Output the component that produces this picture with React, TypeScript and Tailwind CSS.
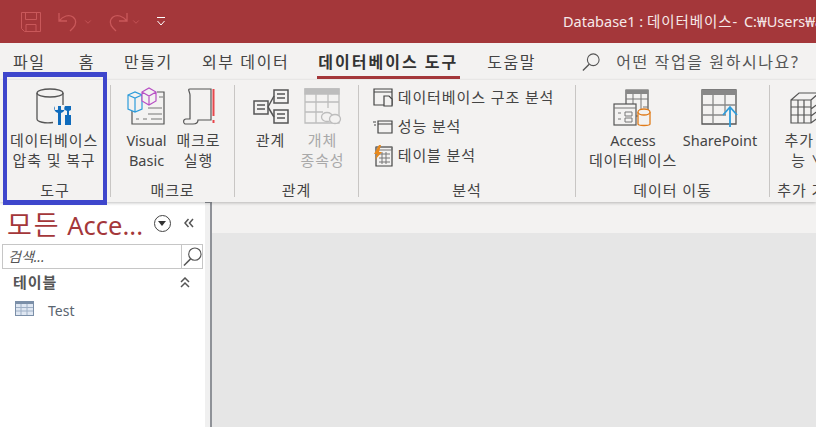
import { ChevronDown } from 'lucide-react';
import type { ReactNode } from 'react';

const font = "font-['Noto_Sans','Noto_Sans_CJK_KR',sans-serif]";
const hangul = /[가-힣]/;

function Kr({ children }: { children: ReactNode }) {
  return <span className="tracking-[0.9px]">{children}</span>;
}

function QuickAccess() {
  return (
    <div className="flex items-center pl-[21px] text-[#c9585a]">
      <svg width="20" height="20" viewBox="0 0 20 20" fill="none" stroke="currentColor">
        <path d="M.5.5h19v19H3.500l-3-3zM4.500.5v7h11v-7M5 19.500v-7h10v7" />
      </svg>
      <div className="ml-[16px] flex items-center gap-[2px]">
        <svg width="24" height="21" viewBox="0 0 24 21" fill="none" stroke="currentColor" strokeWidth="1.300">
          <path d="M2 2v8h8M2 10c4-5 10-7 14-4 4 3 3 8 0 11l-3 3" />
        </svg>
        <ChevronDown className="h-2.5 w-2.5" />
      </div>
      <div className="ml-[12px] flex items-center gap-[2px]">
        <svg width="24" height="21" viewBox="0 0 24 21" fill="none" stroke="currentColor" strokeWidth="1.300">
          <path d="M22 2v8h-8M22 10c-4-5-10-7-14-4-4 3-3 8 0 11l3 3" />
        </svg>
        <ChevronDown className="h-2.5 w-2.5" />
      </div>
      <svg className="ml-[15px]" width="10" height="9" viewBox="0 0 10 9" fill="none" stroke="#fff">
        <path d="M1 .5h8M1.500 4l3.500 4 3.500-4" />
      </svg>
    </div>
  );
}

function Magnifier({ size }: { size: number }) {
  return (
    <svg width={size} height={size} viewBox="0 0 20 20" fill="none" stroke="#555" strokeWidth="1.200">
      <circle cx="12.500" cy="7.500" r="6.500" />
      <path d="M8 12.500 1 19.500" strokeWidth="1.500" />
    </svg>
  );
}

function Tabs() {
  return (
    <div className="flex h-[37px] items-center gap-[29px] pt-[1px] pl-[13px] text-[16px] leading-[22px] tracking-[1.6px] whitespace-nowrap text-[#444]">
      <div className="mr-[4px]">파일</div>
      <div>홈</div>
      <div>만들기</div>
      <div>외부 데이터</div>
      <div className="relative font-bold tracking-[2px] text-[#333]">
        데이터베이스 도구
        <div className="absolute top-[25px] -right-[2px] -left-[1px] h-[3px] bg-[#a4373a]" />
      </div>
      <div>도움말</div>
      <div className="ml-[17px] flex items-center gap-[16px]">
        <Magnifier size={18} />
        <div className="text-[#555]">어떤 작업을 원하시나요?</div>
      </div>
    </div>
  );
}

function BigButton({ icon, lines, muted, w }: { icon: ReactNode; lines: string[]; muted?: boolean; w: string }) {
  return (
    <div className={`flex shrink-0 flex-col items-center text-[14.5px] leading-[20px] ${w} ${muted ? 'text-[#a9a9a9]' : 'text-[#444]'}`}>
      <div className="mb-[4px] flex h-[40px] items-center justify-center">{icon}</div>
      {lines.map((l) => (
        <div key={l} className={`whitespace-nowrap ${hangul.test(l) ? 'text-[15px] tracking-[0.9px]' : ''}`}>{l}</div>
      ))}
    </div>
  );
}

function Group({ label, w, children, noBorder }: { label: string; w: string; children: ReactNode; noBorder?: boolean }) {
  return (
    <div className={`flex h-[112px] shrink-0 flex-col ${w} ${noBorder ? '' : 'border-r border-[#c8c6c4]'}`}>
      <div className="flex flex-1 justify-center pt-[1px]">{children}</div>
      <div className="-mb-[2px] text-center text-[15px] leading-[18px] tracking-[0.9px] whitespace-nowrap text-[#444]">{label}</div>
    </div>
  );
}

function DbIcon() {
  return (
    <svg className="mt-[1px]" width="36" height="38" viewBox="0 0 36 38" fill="none">
      <ellipse cx="14" cy="5" rx="13" ry="4" stroke="#555" strokeWidth="1.300" />
      <path d="M1 5v26c0 3 8 4.500 16 3.500M27 5v12" stroke="#555" strokeWidth="1.300" />
      <path d="M19 18a4.500 4.500 0 0 0 3 7v12h3V25a4.500 4.500 0 0 0 3-7v4h-2.500l-.5-.5V18h-3v3.500l-.5.5H19z" fill="#0f6cbd" />
      <path d="M29 18h6v4l-2 1v4h2v10h-6V27h2v-4l-2-1z" fill="#0f6cbd" />
    </svg>
  );
}

function VbIcon() {
  return (
    <svg width="42" height="40" viewBox="0 0 42 40" fill="none">
      <path d="M31 6h7v32H6V22" stroke="#555" strokeWidth="1.200" />
      <path d="M33 11h4M22 22h14M22 28h14M10 33h3M17 33h4M25 33h11" stroke="#777" strokeWidth="1.200" />
      <path d="M2 9l7-3 7 3v14l-7 3-7-3zM2 9l7 3 7-3M9 12v14" fill="#f3f2f1" stroke="#2d9cdb" strokeWidth="1.200" />
      <path d="M16 6l7-4 7 4v9l-7 4-7-4zM16 6l7 4 7-4M23 10v9" fill="#f3f2f1" stroke="#b74fc4" strokeWidth="1.200" />
    </svg>
  );
}

function MacroIcon() {
  return (
    <svg className="mt-[1px]" width="34" height="38" viewBox="0 0 34 38" fill="none">
      <path d="M8 1h21v31H16c0 3-2 4-5 4H3c-2-1-2-5 1-5h4V7C8 4 5 1 8 1z" fill="#f3f2f1" stroke="#555" strokeWidth="1.200" />
      <path d="M31.500 1v27" stroke="#e8474c" strokeWidth="2" />
      <path d="M31.500 32v3" stroke="#e8474c" strokeWidth="2" />
    </svg>
  );
}

function RelationIcon() {
  return (
    <svg width="36" height="35" viewBox="0 0 36 35" fill="none" stroke="#555" strokeWidth="1.500">
      <rect x="1" y="12" width="14" height="13" />
      <rect x="21" y="1" width="14" height="13" />
      <rect x="21" y="21" width="14" height="13" />
      <path d="M15 18 21 7M15 18l6 10M4 16h8M4 20h8M24 5h8M24 9h8M24 25h8M24 29h8" />
    </svg>
  );
}

function SubFormIcon() {
  return (
    <svg className="mt-[2px]" width="38" height="38" viewBox="0 0 38 38" fill="none" stroke="#bdbdbd" strokeWidth="1.300">
      <path d="M1 1h34v34H1z" />
      <path d="M1 1h34v5H1z" fill="#bdbdbd" />
      <path d="M1 14h34M1 24h18M12 6v29M24 6v14" />
      <ellipse cx="23" cy="29" rx="5.500" ry="4.500" fill="#f3f2f1" />
      <ellipse cx="31" cy="31" rx="5.500" ry="4.500" fill="#f3f2f1" />
    </svg>
  );
}

function SmallRow({ icon, label }: { icon: ReactNode; label: string }) {
  return (
    <div className="flex h-[29px] items-center gap-[5px] text-[15px] tracking-[0.9px] whitespace-nowrap text-[#444]">
      <div className="flex w-[20px] justify-center">{icon}</div>
      {label}
    </div>
  );
}

function AccessDbIcon() {
  return (
    <svg className="mt-[3px]" width="40" height="38" viewBox="0 0 40 38" fill="none">
      <path d="M13 1h22v26H13z" stroke="#555" strokeWidth="1.200" />
      <path d="M13 1h22v4H13z" fill="#888" />
      <path d="M20 5v12M28 5v22M13 10h22M30 18h5" stroke="#777" />
      <rect x="1" y="15" width="22" height="21" fill="#f3f2f1" stroke="#555" strokeWidth="1.200" />
      <path d="M1 19h22M5 24h3M5 30h3M12 23h7v4h-7zM12 29h7v4h-7z" stroke="#777" />
      <path d="M25 23v12c0 2 12 2 12 0V23" fill="#f3f2f1" stroke="#e07b1a" strokeWidth="1.300" />
      <ellipse cx="31" cy="23" rx="6" ry="3" fill="#f3f2f1" stroke="#e07b1a" strokeWidth="1.300" />
    </svg>
  );
}

function SharePointIcon() {
  return (
    <svg className="mt-[3px]" width="38" height="38" viewBox="0 0 38 38" fill="none">
      <path d="M1 1h34v34H1z" stroke="#555" strokeWidth="1.300" />
      <path d="M1 1h34v5H1z" fill="#888" />
      <path d="M1 16h34M1 26h24M12 6v29M24 6v20" stroke="#888" strokeWidth="1.300" />
      <path d="M29 38V18M22 26l7-8 7 8" stroke="#2d9cdb" strokeWidth="1.800" />
    </svg>
  );
}

function CubeIcon() {
  return (
    <svg className="mt-[3px] -ml-[9px]" width="30" height="33" viewBox="0 0 30 33" fill="none" stroke="#555" strokeWidth="1.200">
      <path d="M1 9l8-7h20v24l-8 6H1zM1 9h20v23M21 9l8-7M1 16h20M1 24h20M8 9v23M14 9v23M21 18l8-6M21 25l8-6" />
    </svg>
  );
}

function Ribbon() {
  return (
    <div className="relative z-10 flex h-[122px] overflow-hidden bg-[#f3f2f1] pt-[5px] shadow-[0_1px_3px_rgba(0,0,0,0.25)]">
      <Group label="도구" w="w-[111px]">
        <div className="-ml-[2px]">
          <BigButton w="w-[100px]" icon={<DbIcon />} lines={['데이터베이스', '압축 및 복구']} />
        </div>
      </Group>
      <Group label="매크로" w="w-[124px]">
        <BigButton w="w-[52px]" icon={<VbIcon />} lines={['Visual', 'Basic']} />
        <BigButton w="w-[52px]" icon={<MacroIcon />} lines={['매크로', '실행']} />
      </Group>
      <Group label="관계" w="w-[124px]">
        <BigButton w="w-[52px]" icon={<RelationIcon />} lines={['관계']} />
        <BigButton w="w-[52px]" icon={<SubFormIcon />} lines={['개체', '종속성']} muted />
      </Group>
      <Group label="분석" w="w-[217px]">
        <div className="-mt-[3px] -ml-[7px] flex flex-col">
          <SmallRow
            label="데이터베이스 구조 분석"
            icon={
              <svg width="20" height="19" viewBox="0 0 20 19" fill="none" stroke="#444" strokeWidth="1.200">
                <path d="M1 1h18v16H1zM1 1h18v3H1z" />
                <path d="M11 8h5l3 3v7h-8z" fill="#f3f2f1" />
              </svg>
            }
          />
          <SmallRow
            label="성능 분석"
            icon={
              <svg width="20" height="14" viewBox="0 0 20 14" fill="none" stroke="#444" strokeWidth="1.200">
                <path d="M5 1h14v12H5zM5 1h14v3H5zM0 2h3M1 5h2" />
              </svg>
            }
          />
          <SmallRow
            label="테이블 분석"
            icon={
              <svg width="20" height="22" viewBox="0 0 20 22" fill="none">
                <path d="M3 2h16v19H3z" stroke="#444" strokeWidth="1.200" />
                <path d="M3 2h16v3H3zM6 9h11M6 13h11M6 17h11M9 7v12M13 7v12" stroke="#777" />
                <path d="M6 0 1 9h3l-2 6 7-8H6l2-7z" fill="#e8891c" />
              </svg>
            }
          />
        </div>
      </Group>
      <Group label="데이터 이동" w="w-[194px]">
        <div className="ml-[8px] flex">
          <BigButton w="w-[87px]" icon={<AccessDbIcon />} lines={['Access', '데이터베이스']} />
          <BigButton w="w-[87px]" icon={<SharePointIcon />} lines={['SharePoint']} />
        </div>
      </Group>
      <Group label="추가 기능" w="w-[78px]" noBorder>
        <BigButton w="w-[78px]" icon={<CubeIcon />} lines={['추가 기', '능 ∨']} />
      </Group>
    </div>
  );
}

function NavPane() {
  return (
    <div className="flex w-[205px] shrink-0 flex-col bg-white">
      <div className="flex h-[42px] items-center pl-[7px]">
        <span className="pt-[4px] text-[25.5px] leading-none whitespace-nowrap text-[#a4373a]">
          <span className="text-[27px] tracking-[2px]">모든</span> Acce...
        </span>
        <div className="ml-[11px] flex h-[17px] w-[17px] shrink-0 items-center justify-center rounded-full border border-[#444]">
          <div className="h-0 w-0 border-x-[4px] border-t-[5px] border-x-transparent border-t-[#333]" />
        </div>
        <svg className="ml-[13px] shrink-0" width="10" height="10" viewBox="0 0 10 10" fill="none" stroke="#555" strokeWidth="1.500">
          <path d="M4.500 1 1 5l3.500 4M9 1 5.500 5 9 9" />
        </svg>
      </div>
      <div className="mx-[2px] flex h-[25px] border border-[#c6c6c6]">
        <div className="flex-1 pl-[5px] text-[14px] leading-[23px] text-[#555] italic">검색...</div>
        <div className="flex w-[21px] items-center justify-center border-l border-[#c6c6c6]">
          <Magnifier size={19} />
        </div>
      </div>
      <div className="flex h-[27px] items-center justify-between pr-[15px] pl-[13px] text-[15px] font-bold tracking-[0.9px] text-[#555]">
        테이블
        <svg width="10" height="11" viewBox="0 0 10 11" fill="none" stroke="#555" strokeWidth="1.500">
          <path d="M1 5l4-4 4 4M1 10l4-4 4 4" />
        </svg>
      </div>
      <div className="flex h-[28px] items-center pl-[15px] text-[14px] text-[#5a6570]">
        <svg className="-mt-[4px]" width="19" height="15" viewBox="0 0 19 15">
          <rect x="0" y="0" width="19" height="15" fill="#7b8fa8" />
          <rect x="1" y="3" width="17" height="11" fill="#dfe7f2" />
          <path d="M1 6.500h17M1 10h17M6 3v11M12 3v11" stroke="#9fb0c6" />
        </svg>
        <span className="ml-[14px]">Test</span>
      </div>
    </div>
  );
}

export default function App() {
  return (
    <div className={`relative flex h-[427px] w-[816px] flex-col overflow-hidden bg-white ${font}`}>
      <div className="flex h-[43px] shrink-0 items-center justify-between bg-[#a4373a]">
        <QuickAccess />
        <div className="w-[253px] overflow-hidden text-[14.5px] whitespace-nowrap text-[#f6e9e9]">
          Database1 : <Kr>데이터베이스</Kr>- <span className="ml-[3px]">C:₩Users₩admin</span>
        </div>
      </div>
      <div className="shrink-0 bg-[#f3f2f1]">
        <Tabs />
      </div>
      <Ribbon />
      <div className="flex flex-1">
        <NavPane />
        <div className="w-[7px] shrink-0 border-t border-r-2 border-[#8f9298] bg-[#f0f0f0]" />
        <div className="flex flex-1 flex-col bg-[#e6e6e6]">
          <div className="h-[31px] bg-[#f3f2f1]" />
        </div>
      </div>
      <div className="pointer-events-none absolute top-[72px] left-[3px] z-20 h-[133px] w-[104px] border-x-[4px] border-y-[5px] border-[#3e46cc]" />
    </div>
  );
}
